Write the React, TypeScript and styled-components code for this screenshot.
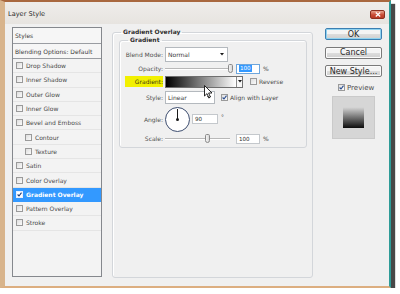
import React from 'react';
import styled, { createGlobalStyle, css } from 'styled-components';

const GlobalStyle = createGlobalStyle`
  html, body {
    margin: 0;
    padding: 0;
    background: #ffffff;
  }
  body {
    font-family: "DejaVu Sans", "Liberation Sans", sans-serif;
    color: #3a3a3a;
  }
  * {
    box-sizing: border-box;
  }
`;

const Frame = styled.div`
  width: 391px;
  height: 288px;
  display: flex;
  flex-direction: column;
  border-left: 5px solid #d8b48c;
  border-top: 2px solid #a9683f;
  border-right: 2px solid #2e9c98;
  border-bottom: 2px solid #dcae80;
  box-shadow: 4px 4px 1px rgba(40, 40, 40, 0.85);
  background: #f0f0f0;
`;

const TitleBar = styled.div`
  height: 22px;
  flex: none;
  display: flex;
  align-items: center;
  justify-content: space-between;
  padding: 0 4px 0 3px;
  background: linear-gradient(#efedea, #e7e4e0);
`;

const Title = styled.span`
  font-size: 6.6px;
  color: #2a2a2a;
  margin-top: 2px;
`;

const CloseButton = styled.div`
  width: 15px;
  height: 9px;
  margin-top: 3px;
  border: 1px solid #8c2f1f;
  border-radius: 2px;
  background: linear-gradient(#e9a590, #c84a34 55%, #b93a25);
  display: flex;
  align-items: center;
  justify-content: center;
`;

const Body = styled.div`
  flex: 1;
  display: flex;
  align-items: flex-start;
  padding: 3px 0 0 7px;
`;

const StylesPanel = styled.div`
  width: 90px;
  height: 250px;
  border: 1px solid #85888d;
  background: #f3f3f3;
  display: flex;
  flex-direction: column;
`;

const HeaderRow = styled.div<{ $h: number }>`
  height: ${(p) => p.$h}px;
  flex: none;
  display: flex;
  align-items: center;
  padding-left: 2px;
  font-size: 6px;
  color: #3c3c3c;
  border-bottom: 1px solid #9a9da2;
  background: #f6f6f6;
`;

const StyleRow = styled.div<{ $indent?: boolean; $selected?: boolean }>`
  height: 14.3px;
  flex: none;
  display: flex;
  align-items: center;
  gap: 3px;
  padding-left: ${(p) => (p.$indent ? 12 : 3)}px;
  font-size: 6px;
  color: #4a4a4a;
  border-bottom: 1px solid #e5e5e5;
  ${(p) =>
    p.$selected &&
    css`
      background: #3399ff;
      color: #ffffff;
      font-weight: bold;
      border-bottom-color: #3399ff;
    `}
`;

const Box = styled.span<{ $light?: boolean }>`
  width: 7px;
  height: 7px;
  flex: none;
  border: 1px solid ${(p) => (p.$light ? '#e8f0ff' : '#9a9a9a')};
  background: ${(p) => (p.$light ? '#ffffff' : 'linear-gradient(135deg, #dedede, #fbfbfb)')};
  display: inline-flex;
  align-items: center;
  justify-content: center;
`;

const Check: React.FC<{ checked?: boolean; light?: boolean }> = ({ checked, light }) => (
  <Box $light={light}>
    {checked && (
      <svg width="5" height="5" viewBox="0 0 5 5">
        <path d="M0.6 2.5 L2 4 L4.5 0.6" fill="none" stroke={light ? '#1c3c78' : '#2a4d8f'} strokeWidth="1.1" />
      </svg>
    )}
  </Box>
);

const Group = styled.fieldset`
  margin: 1px 0 0 10px;
  padding: 0;
  width: 201px;
  height: 250px;
  border: 1px solid #d3d6da;
  border-radius: 3px;
  box-shadow: inset 1px 1px 0 #ffffff;
`;

const Legend = styled.legend`
  margin-left: 8px;
  padding: 0 2px;
  font-size: 6px;
  line-height: 8px;
  font-weight: bold;
  color: #2e2e2e;
`;

const InnerGroup = styled.fieldset`
  margin: 0 0 0 6px;
  padding: 2px 0 3px 0;
  width: 188px;
  border: 1px solid #d3d6da;
  border-radius: 3px;
  box-shadow: inset 1px 1px 0 #ffffff;
`;

const Row = styled.div<{ $h: number }>`
  height: ${(p) => p.$h}px;
  display: flex;
  align-items: center;
`;

const Label = styled.span<{ $mark?: boolean }>`
  width: 43px;
  flex: none;
  margin-right: 2px;
  text-align: right;
  font-size: 6px;
  color: #505050;
  ${(p) =>
    p.$mark &&
    css`
      background: #f2f000;
      height: 11px;
      line-height: 11px;
      margin-left: 5px;
      width: 38px;
      color: #3a3a10;
    `}
`;

const Select = styled.div<{ $w: number; $h: number }>`
  width: ${(p) => p.$w}px;
  height: ${(p) => p.$h}px;
  border: 1px solid #b4b9be;
  background: #ffffff;
  display: flex;
  align-items: center;
  justify-content: space-between;
  padding: 0 3px 0 2px;
  font-size: 6px;
  color: #3a3a3a;
`;

const Arrow = () => (
  <svg width="4" height="3" viewBox="0 0 4 3">
    <path d="M0 0 H4 L2 2.6 Z" fill="#1a1a1a" />
  </svg>
);

const Track = styled.div<{ $w: number }>`
  position: relative;
  width: ${(p) => p.$w}px;
  height: 2px;
  border-top: 1px solid #b8b8b8;
  border-bottom: 1px solid #ffffff;
  margin-right: 6px;
`;

const Thumb = styled.span`
  position: absolute;
  top: -5px;
  width: 5px;
  height: 9px;
  margin-left: -2px;
  border: 1px solid #8a8a8a;
  border-radius: 2px 2px 3px 3px;
  background: linear-gradient(90deg, #f4f4f4, #d8d8d8);
`;

const Field = styled.div<{ $w: number; $focus?: boolean }>`
  width: ${(p) => p.$w}px;
  height: 10px;
  border: 1px solid ${(p) => (p.$focus ? '#6ea6dc' : '#c4c8cc')};
  background: #ffffff;
  display: flex;
  align-items: center;
  padding-left: 2px;
  font-size: 5.6px;
  color: #2e2e2e;
`;

const Selected = styled.span`
  background: #3399ff;
  color: #ffffff;
  padding: 0 1px;
  line-height: 7px;
`;

const Unit = styled.span`
  font-size: 6px;
  color: #4a4a4a;
  margin-left: 3px;
`;

const Swatch = styled.div`
  position: relative;
  width: 78px;
  height: 12px;
  border: 1px solid #6f6f6f;
  display: flex;
`;

const Ramp = styled.div`
  flex: 1;
  background: linear-gradient(90deg, #000000, #ffffff);
`;

const SwatchDrop = styled.div`
  width: 6px;
  border-left: 1px solid #8a8a8a;
  background: #f7f7f7;
  display: flex;
  align-items: center;
  justify-content: center;
`;

const Cursor = styled.svg`
  position: absolute;
  left: 38px;
  top: 8px;
`;

const CheckLabel = styled.span<{ $size?: number }>`
  display: inline-flex;
  align-items: center;
  gap: 2px;
  font-size: ${(p) => p.$size ?? 6}px;
  color: #4a4a4a;
`;

const Dial = styled.div`
  position: relative;
  width: 25px;
  height: 25px;
  border-radius: 50%;
  border: 1px solid #3e4e70;
  background: #ffffff;
  margin-right: 2px;
`;

const Needle = styled.span`
  position: absolute;
  left: 11px;
  top: 1px;
  width: 1px;
  height: 11px;
  background: #1a1a1a;
`;

const Pivot = styled.span`
  position: absolute;
  left: 10px;
  top: 10.5px;
  width: 3px;
  height: 3px;
  border-radius: 50%;
  background: #1a1a1a;
`;

const Side = styled.div`
  margin-left: 12px;
  padding-top: 1px;
  display: flex;
  flex-direction: column;
  align-items: flex-start;
`;

const Button = styled.div<{ $default?: boolean }>`
  width: 57px;
  height: 12px;
  margin-bottom: 6.5px;
  border: 1px solid ${(p) => (p.$default ? '#3c7fb1' : '#7a7a7a')};
  border-radius: 2px;
  background: linear-gradient(#f4f4f4 45%, #dcdcdc 55%, #cfcfcf);
  box-shadow: ${(p) => (p.$default ? 'inset 0 0 0 1px #8fd2f0' : 'inset 0 0 0 1px #fbfbfb')};
  display: flex;
  align-items: center;
  justify-content: center;
  font-size: 8px;
  color: #2a2a2a;
`;

const PreviewCheck = styled.div`
  margin: -2px 0 0 13px;
  height: 12px;
  display: flex;
  align-items: center;
`;

const PreviewBox = styled.div`
  margin: 2px 0 0 7px;
  width: 43px;
  height: 43px;
  background: #d6d6d6;
  border: 1px solid #cacaca;
  display: flex;
  align-items: center;
  justify-content: center;
`;

const PreviewSwatch = styled.div`
  width: 21px;
  height: 21px;
  background: linear-gradient(#d8d8d8, #0c0c0c);
`;

const styleItems: { name: string; indent?: boolean; checked?: boolean; selected?: boolean }[] = [
  { name: 'Drop Shadow' },
  { name: 'Inner Shadow' },
  { name: 'Outer Glow' },
  { name: 'Inner Glow' },
  { name: 'Bevel and Emboss' },
  { name: 'Contour', indent: true },
  { name: 'Texture', indent: true },
  { name: 'Satin' },
  { name: 'Color Overlay' },
  { name: 'Gradient Overlay', checked: true, selected: true },
  { name: 'Pattern Overlay' },
  { name: 'Stroke' },
];

const Slider: React.FC<{ width: number; value: number }> = ({ width, value }) => (
  <Track $w={width}>
    <Thumb style={{ left: `${value * 100}%` }} />
  </Track>
);

const App: React.FC = () => {
  return (
    <>
      <GlobalStyle />
      <Frame>
        <TitleBar>
          <Title>Layer Style</Title>
          <CloseButton>
            <svg width="6" height="5" viewBox="0 0 6 5">
              <path d="M0.8 0.5 L5.2 4.5 M5.2 0.5 L0.8 4.5" stroke="#ffffff" strokeWidth="1.3" />
            </svg>
          </CloseButton>
        </TitleBar>

        <Body>
          <StylesPanel>
            <HeaderRow $h={16}>Styles</HeaderRow>
            <HeaderRow $h={15}>Blending Options: Default</HeaderRow>
            {styleItems.map((item) => (
              <StyleRow key={item.name} $indent={item.indent} $selected={item.selected}>
                <Check checked={item.checked} light={item.selected} />
                {item.name}
              </StyleRow>
            ))}
          </StylesPanel>

          <Group>
            <Legend>Gradient Overlay</Legend>
            <InnerGroup>
              <Legend>Gradient</Legend>
              <Row $h={17}>
                <Label>Blend Mode:</Label>
                <Select $w={63} $h={15}>
                  Normal
                  <Arrow />
                </Select>
              </Row>
              <Row $h={11}>
                <Label>Opacity:</Label>
                <Slider width={65} value={1} />
                <Field $w={24} $focus>
                  <Selected>100</Selected>
                </Field>
                <Unit>%</Unit>
              </Row>
              <Row $h={15}>
                <Label $mark>Gradient:</Label>
                <Swatch>
                  <Ramp />
                  <SwatchDrop>
                    <Arrow />
                  </SwatchDrop>
                  <Cursor width="9" height="14" viewBox="0 0 9 14">
                    <path d="M0.5 0.5 L0.5 11 L3 8.6 L4.8 12.8 L6.4 12 L4.6 8 L8 8 Z" fill="#ffffff" stroke="#111111" strokeWidth="0.9" />
                  </Cursor>
                </Swatch>
                <CheckLabel style={{ marginLeft: 7 }}>
                  <Check />
                  Reverse
                </CheckLabel>
              </Row>
              <Row $h={16}>
                <Label>Style:</Label>
                <Select $w={50} $h={13}>
                  Linear
                  <Arrow />
                </Select>
                <CheckLabel style={{ marginLeft: 6 }}>
                  <Check checked />
                  Align with Layer
                </CheckLabel>
              </Row>
              <Row $h={28}>
                <Label>Angle:</Label>
                <Dial>
                  <Needle />
                  <Pivot />
                </Dial>
                <Field $w={26}>90</Field>
                <Unit style={{ alignSelf: 'flex-start', marginTop: 8 }}>°</Unit>
              </Row>
              <Row $h={11}>
                <Label>Scale:</Label>
                <Slider width={65} value={0.65} />
                <Field $w={24}>100</Field>
                <Unit>%</Unit>
              </Row>
            </InnerGroup>
          </Group>

          <Side>
            <Button $default>OK</Button>
            <Button>Cancel</Button>
            <Button>New Style...</Button>
            <PreviewCheck>
              <CheckLabel $size={7}>
                <Check checked />
                Preview
              </CheckLabel>
            </PreviewCheck>
            <PreviewBox>
              <PreviewSwatch />
            </PreviewBox>
          </Side>
        </Body>
      </Frame>
    </>
  );
};

export default App;
